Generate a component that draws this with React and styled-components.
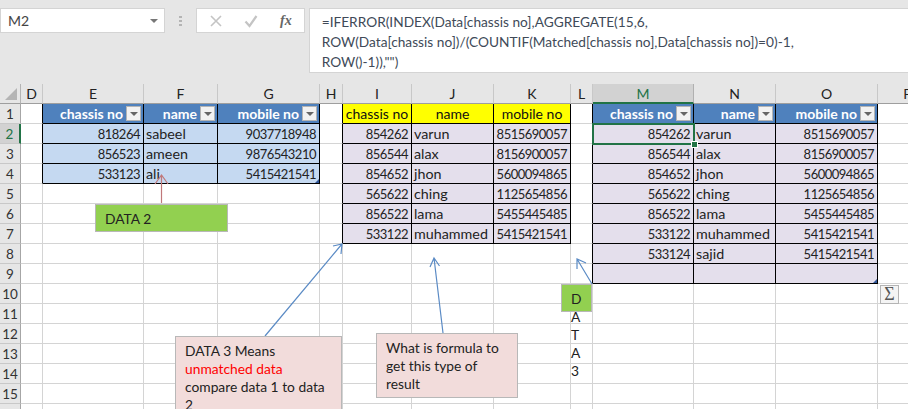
import React from 'react'
import styled, { createGlobalStyle } from 'styled-components'

const COLUMNS = [
    ['D', 22], ['E', 101], ['F', 74], ['G', 102], ['H', 23], ['I', 69], ['J', 82], ['K', 77],
    ['L', 22], ['M', 101], ['N', 82], ['O', 102], ['P', 60],
]

const TABLES = [
    {
        start: 1,
        kind: 'blue',
        filter: true,
        head: ['chassis no', 'name', 'mobile no'],
        rows: [
            ['818264', 'sabeel', '9037718948'],
            ['856523', 'ameen', '9876543210'],
            ['533123', 'ali', '5415421541'],
        ],
        handle: true,
    },
    {
        start: 5,
        kind: 'lilac',
        head: ['chassis no', 'name', 'mobile no'],
        rows: [
            ['854262', 'varun', '8515690057'],
            ['856544', 'alax', '8156900057'],
            ['854652', 'jhon', '5600094865'],
            ['565622', 'ching', '1125654856'],
            ['856522', 'lama', '5455445485'],
            ['533122', 'muhammed', '5415421541'],
        ],
    },
    {
        start: 9,
        kind: 'lilac',
        filter: true,
        head: ['chassis no', 'name', 'mobile no'],
        rows: [
            ['854262', 'varun', '8515690057'],
            ['856544', 'alax', '8156900057'],
            ['854652', 'jhon', '5600094865'],
            ['565622', 'ching', '1125654856'],
            ['856522', 'lama', '5455445485'],
            ['533122', 'muhammed', '5415421541'],
            ['533124', 'sajid', '5415421541'],
            ['', '', ''],
        ],
        handle: true,
    },
]

const ROW_COUNT = 16

function findTable(row, col) {
    return TABLES.find(t => col >= t.start && col < t.start + 3 && row >= 1 && row <= t.rows.length + 1)
}

function SheetCell({ row, col }) {
    const table = findTable(row, col)
    const edgeRight = Boolean(table || findTable(row, col + 1))
    const edgeBottom = Boolean(table || findTable(row + 1, col))

    if (!table) {
        return <Cell $edgeRight={edgeRight} $edgeBottom={edgeBottom} />
    }

    const index = col - table.start
    if (row === 1) {
        return (
            <HeadCell $edgeRight $edgeBottom $plain={!table.filter}>
                {table.head[index]}
                {table.filter && <FilterButton><FilterArrow /></FilterButton>}
            </HeadCell>
        )
    }

    const isLast = row === table.rows.length + 1 && index === 2
    return (
        <Cell
            $edgeRight
            $edgeBottom
            $kind={table.kind}
            $numeric={index !== 1}
            $active={table.start === 9 && row === 2 && index === 0}
            $handle={table.handle && isLast}
        >
            {table.rows[row - 2][index]}
        </Cell>
    )
}

function XIcon() {
    return (
        <svg width="14" height="14" viewBox="0 0 14 14">
            <path d="M2 2l10 10M12 2L2 12" stroke="#c4c4c4" strokeWidth="1.6" fill="none" />
        </svg>
    )
}

function CheckIcon() {
    return (
        <svg width="14" height="14" viewBox="0 0 14 14">
            <path d="M1.5 7.5l4 4.5 7-10" stroke="#c4c4c4" strokeWidth="2.2" fill="none" />
        </svg>
    )
}

function ArrowLayer() {
    const heads = [
        { color: '#c0787a', d: 'M161.5 203V175M155 184l6.5-9 6.5 9' },
        { color: '#5b8bc5', d: 'M265 336L342 244M333 246l9-2-1 10' },
        { color: '#5b8bc5', d: 'M443 333L434 258M430 267l4-9 5.5 8' },
        { color: '#5b8bc5', d: 'M592 284L577 259M577 269l0-10 9 4' },
    ]
    return (
        <Arrows width="908" height="325" viewBox="0 84 908 325">
            {heads.map(h => <path key={h.d} d={h.d} stroke={h.color} strokeWidth="1.2" fill="none" />)}
        </Arrows>
    )
}

export default function App() {
    return (
        <Page>
            <GlobalStyle />
            <Ribbon>
                <NameBox>
                    M2
                    <DropArrow />
                </NameBox>
                <Grip><i /><i /><i /></Grip>
                <FormulaTools>
                    <XIcon />
                    <CheckIcon />
                    <FxLabel>fx</FxLabel>
                </FormulaTools>
                <FormulaBox>
                    =IFERROR(INDEX(Data[chassis no],AGGREGATE(15,6,<br />
                    ROW(Data[chassis no])/(COUNTIF(Matched[chassis no],Data[chassis no])=0)-1,<br />
                    ROW()-1)),"")
                </FormulaBox>
            </Ribbon>

            <Sheet>
                <Corner><CornerMark /></Corner>
                {COLUMNS.map(([name]) => (
                    <ColumnHeader key={name} $selected={name === 'M'}>{name}</ColumnHeader>
                ))}
                {Array.from({ length: ROW_COUNT }, (_, r) => (
                    <React.Fragment key={r}>
                        <RowHeader $selected={r === 1}>{r < 15 ? r + 1 : ''}</RowHeader>
                        {COLUMNS.map((_, c) => <SheetCell key={c} row={r + 1} col={c} />)}
                    </React.Fragment>
                ))}

                <ArrowLayer />
                <GreenNote $left={95} $top={120} $width={133} $height={28}>DATA 2</GreenNote>
                <PinkNote $left={175} $top={252} $width={167} $height={90}>
                    DATA 3 Means<br />
                    <RedText>unmatched data</RedText><br />
                    compare data 1 to data 2
                </PinkNote>
                <PinkNote $left={376} $top={249} $width={142} $height={65}>
                    What is formula to get this type of result
                </PinkNote>
                <GreenNote $left={561} $top={200} $width={31} $height={28} $narrow>
                    D A T A 3
                </GreenNote>
                <QuickAnalysis>Σ</QuickAnalysis>
            </Sheet>
        </Page>
    )
}

const GlobalStyle = createGlobalStyle`
    html, body {
        margin: 0;
        padding: 0;
        background: #fff;
    }
`

const Page = styled.div`
    width: 908px;
    height: 409px;
    overflow: hidden;
    font-family: Lato, "Open Sans", sans-serif;
    color: #222;
`

const Ribbon = styled.div`
    height: 84px;
    box-sizing: border-box;
    padding: 8px 0 0;
    display: flex;
    align-items: flex-start;
    background: #e6e6e6;
`

const NameBox = styled.div`
    width: 165px;
    height: 25px;
    box-sizing: border-box;
    padding: 0 6px 0 7px;
    display: flex;
    align-items: center;
    justify-content: space-between;
    background: #fff;
    border: 1px solid #d4d4d4;
    font-size: 14px;
    color: #444;
`

const DropArrow = styled.span`
    width: 0;
    height: 0;
    border-left: 4px solid transparent;
    border-right: 4px solid transparent;
    border-top: 4px solid #777;
`

const Grip = styled.div`
    width: 31px;
    height: 25px;
    display: flex;
    flex-direction: column;
    align-items: center;
    justify-content: center;
    gap: 2px;

    i {
        width: 3px;
        height: 2px;
        background: #b4b4b4;
    }
`

const FormulaTools = styled.div`
    width: 109px;
    height: 25px;
    box-sizing: border-box;
    padding: 0 12px;
    display: flex;
    align-items: center;
    justify-content: space-between;
    background: #fff;
    border: 1px solid #d4d4d4;
`

const FxLabel = styled.span`
    font-family: "Liberation Serif", serif;
    font-style: italic;
    font-weight: bold;
    font-size: 14px;
    color: #666;
`

const FormulaBox = styled.div`
    width: 600px;
    height: 65px;
    margin-left: 4px;
    box-sizing: border-box;
    padding: 3px 0 0 12px;
    background: #fff;
    border: 1px solid #d4d4d4;
    border-right: 0;
    font-size: 13.7px;
    line-height: 20px;
    color: #404a58;
    white-space: nowrap;
    overflow: hidden;
`

const Sheet = styled.div`
    position: relative;
    display: grid;
    grid-template-columns: 21px ${COLUMNS.map(c => `${c[1]}px`).join(' ')};
    grid-auto-rows: 20px;
    background: #fff;
    font-size: 14.3px;
`

const Corner = styled.div`
    position: relative;
    background: #e6e6e6;
    border-right: 1px solid #b4b4b4;
    border-bottom: 1px solid #9e9e9e;
`

const CornerMark = styled.div`
    position: absolute;
    right: 3px;
    bottom: 3px;
    width: 0;
    height: 0;
    border-left: 12px solid transparent;
    border-bottom: 12px solid #b4b4b4;
`

const ColumnHeader = styled.div`
    box-sizing: border-box;
    display: flex;
    align-items: center;
    justify-content: center;
    background: ${p => (p.$selected ? '#d2d2d2' : '#e6e6e6')};
    color: ${p => (p.$selected ? '#217346' : '#222')};
    border-right: 1px solid ${p => (p.$selected ? '#b0b0b0' : '#c8c8c8')};
    border-bottom: ${p => (p.$selected ? '2px solid #217346' : '1px solid #9e9e9e')};
    font-size: 14px;
`

const RowHeader = styled.div`
    box-sizing: border-box;
    display: flex;
    align-items: center;
    justify-content: center;
    background: ${p => (p.$selected ? '#d2d2d2' : '#e6e6e6')};
    color: ${p => (p.$selected ? '#217346' : '#333')};
    border-right: ${p => (p.$selected ? '2px solid #217346' : '1px solid #a6a6a6')};
    border-bottom: 1px solid #c8c8c8;
    font-size: 13.5px;
`

const KIND_COLORS = { blue: '#c5d9f1', lilac: '#e4dfec' }

const Cell = styled.div`
    position: relative;
    z-index: ${p => (p.$active ? 1 : 'auto')};
    box-sizing: border-box;
    min-width: 0;
    padding: 0 3px 0 2px;
    display: flex;
    align-items: center;
    justify-content: ${p => (p.$numeric ? 'flex-end' : 'flex-start')};
    white-space: nowrap;
    color: #222;
    font-size: ${p => (p.$numeric ? '13px' : 'inherit')};
    letter-spacing: ${p => (p.$numeric ? '-0.5px' : '0')};
    background: ${p => KIND_COLORS[p.$kind] || '#fff'};
    border-right: 1px solid ${p => (p.$edgeRight ? '#000' : '#d4d4d4')};
    border-bottom: 1px solid ${p => (p.$edgeBottom ? '#000' : '#d4d4d4')};

    ${p => p.$active && `
        &::before {
            content: '';
            position: absolute;
            inset: -1px -2px -2px -1px;
            border: 2px solid #217346;
        }
        &::after {
            content: '';
            position: absolute;
            right: -5px;
            bottom: -5px;
            width: 5px;
            height: 5px;
            background: #217346;
            border: 1px solid #fff;
        }
    `}

    ${p => p.$handle && `
        &::after {
            content: '';
            position: absolute;
            right: 0;
            bottom: 0;
            width: 0;
            height: 0;
            border-left: 4px solid transparent;
            border-bottom: 4px solid #2f5597;
        }
    `}
`

const HeadCell = styled.div`
    box-sizing: border-box;
    min-width: 0;
    padding: 0 ${p => (p.$plain ? '0' : '2px')} 0 0;
    display: flex;
    align-items: center;
    justify-content: ${p => (p.$plain ? 'center' : 'flex-end')};
    gap: 3px;
    white-space: nowrap;
    font-size: 14px;
    font-weight: ${p => (p.$plain ? 400 : 700)};
    color: ${p => (p.$plain ? '#111' : '#fff')};
    background: ${p => (p.$plain ? '#ffff00' : '#4f81bd')};
    border-right: 1px solid #000;
    border-bottom: 1px solid #000;
`

const FilterButton = styled.span`
    width: 15px;
    height: 15px;
    flex: none;
    box-sizing: border-box;
    display: flex;
    align-items: center;
    justify-content: center;
    background: #f2f2f2;
    border: 1px solid #b4b4b4;
`

const FilterArrow = styled.span`
    width: 0;
    height: 0;
    border-left: 4px solid transparent;
    border-right: 4px solid transparent;
    border-top: 4px solid #666;
`

const Arrows = styled.svg`
    position: absolute;
    left: 0;
    top: 0;
    z-index: 2;
    pointer-events: none;
`

const Note = styled.div`
    position: absolute;
    z-index: 3;
    left: ${p => p.$left}px;
    top: ${p => p.$top}px;
    width: ${p => p.$width}px;
    height: ${p => p.$height}px;
    box-sizing: border-box;
    padding: 5px 9px;
    border: 1px solid #b8b8b8;
    font-size: 13.8px;
    line-height: 18px;
    color: #222;
`

const GreenNote = styled(Note)`
    background: #92d050;
    ${p => p.$narrow && `
        word-spacing: 30px;
    `}
`

const PinkNote = styled(Note)`
    background: #f2dcdb;
`

const RedText = styled.span`
    color: #ff0000;
`

const QuickAnalysis = styled.div`
    position: absolute;
    z-index: 3;
    left: 880px;
    top: 201px;
    width: 19px;
    height: 19px;
    box-sizing: border-box;
    display: flex;
    align-items: center;
    justify-content: center;
    background: #f4f4f4;
    border: 1px solid #b4b4b4;
    font-family: "Liberation Serif", serif;
    font-size: 18px;
    color: #555;
`
